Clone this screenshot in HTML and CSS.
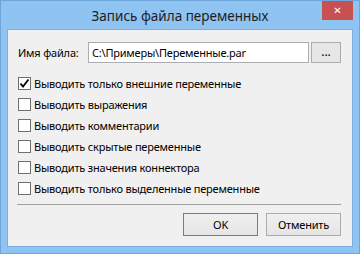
FILE: index.html
```html
<!DOCTYPE html>
<html lang="ru">

<head>
    <meta charset="UTF-8">
    <title>Запись файла переменных</title>
    <link rel="stylesheet" href="styles.css">
</head>

<body>
    <div class="window">
        <div class="titlebar">
            <span></span>
            <span class="title">Запись файла переменных</span>
            <button type="button" class="close">&#x2715;</button>
        </div>

        <form class="client">
            <div class="file-row">
                <label for="fileName" class="file-label">Имя файла:</label>
                <input type="text" id="fileName" class="file-input" value="C:\Примеры\Переменные.par">
                <button type="button" class="browse">...</button>
            </div>

            <div class="options">
                <label class="option">
                    <span class="box checked">
                        <svg width="11" height="11" viewBox="0 0 11 11"><path d="M1.5 5.5 L4 8.5 L9.5 1.5" fill="none" stroke="#000" stroke-width="1.8"/></svg>
                    </span>
                    Выводить только внешние переменные
                </label>
                <label class="option"><span class="box"></span>Выводить выражения</label>
                <label class="option"><span class="box"></span>Выводить комментарии</label>
                <label class="option"><span class="box"></span>Выводить скрытые переменные</label>
                <label class="option"><span class="box"></span>Выводить значения коннектора</label>
                <label class="option"><span class="box"></span>Выводить только выделенные переменные</label>
            </div>

            <div class="separator"></div>

            <div class="buttons">
                <button type="button" class="btn default">OK</button>
                <button type="button" class="btn">Отменить</button>
            </div>
        </form>
    </div>
</body>

</html>
```

FILE: styles.css
```css
body {
    margin: 0;
    font-family: "Noto Sans", "Open Sans", sans-serif;
    font-size: 11px;
    letter-spacing: -0.2px;
    color: #000;
}

.window {
    width: 360px;
    height: 254px;
    box-sizing: border-box;
    background-color: #8fc3f1;
    border: 1px solid #6ea6dc;
    display: flex;
    flex-direction: column;
}

.titlebar {
    height: 29px;
    display: grid;
    grid-template-columns: 1fr auto 1fr;
    align-items: start;
}

.title {
    font-size: 13.5px;
    letter-spacing: 0;
    line-height: 30px;
    color: #1e1e1e;
}

.close {
    justify-self: end;
    width: 31px;
    height: 19px;
    margin-right: 6px;
    border: none;
    padding: 0;
    background-color: #c75050;
    color: #fff;
    font-size: 10px;
    font-family: "DejaVu Sans", sans-serif;
}

.client {
    margin: 0 7px 7px 7px;
    flex: 1;
    background-color: #f0f0f0;
    outline: 1px solid #7aafe0;
    padding: 12px 11px 9px 10px;
    display: flex;
    flex-direction: column;
}

.file-row {
    display: flex;
    align-items: center;
    height: 21px;
}

.file-label {
    width: 70px;
}

.file-input {
    width: 221px;
    height: 21px;
    box-sizing: border-box;
    border: 1px solid #abadb3;
    padding: 0 3px;
    font-family: inherit;
    font-size: 11px;
    letter-spacing: -0.2px;
    background-color: #fff;
}

.browse {
    width: 30px;
    height: 21px;
    margin-left: 2px;
    border: 1px solid #acacac;
    background-color: #e6e6e6;
    font-family: inherit;
    font-size: 12px;
    padding: 0 0 4px 0;
}

.options {
    margin-top: 10px;
    display: flex;
    flex-direction: column;
}

.option {
    height: 21px;
    display: flex;
    align-items: center;
}

.box {
    width: 13px;
    height: 13px;
    box-sizing: border-box;
    border: 1px solid #707070;
    background-color: #fff;
    margin-right: 3px;
    display: flex;
    align-items: center;
    justify-content: center;
}

.separator {
    margin-top: 5px;
    border-top: 1px solid #a0a0a0;
    margin-left: -1px;
}

.buttons {
    margin-top: 8px;
    display: flex;
    justify-content: flex-end;
    gap: 8px;
}

.btn {
    width: 75px;
    height: 23px;
    border: 1px solid #acacac;
    background: linear-gradient(#f0f0f0, #e5e5e5);
    font-family: inherit;
    font-size: 11px;
    letter-spacing: -0.2px;
    padding: 0;
}

.btn.default {
    border-color: #3c8ad8;
}
```
